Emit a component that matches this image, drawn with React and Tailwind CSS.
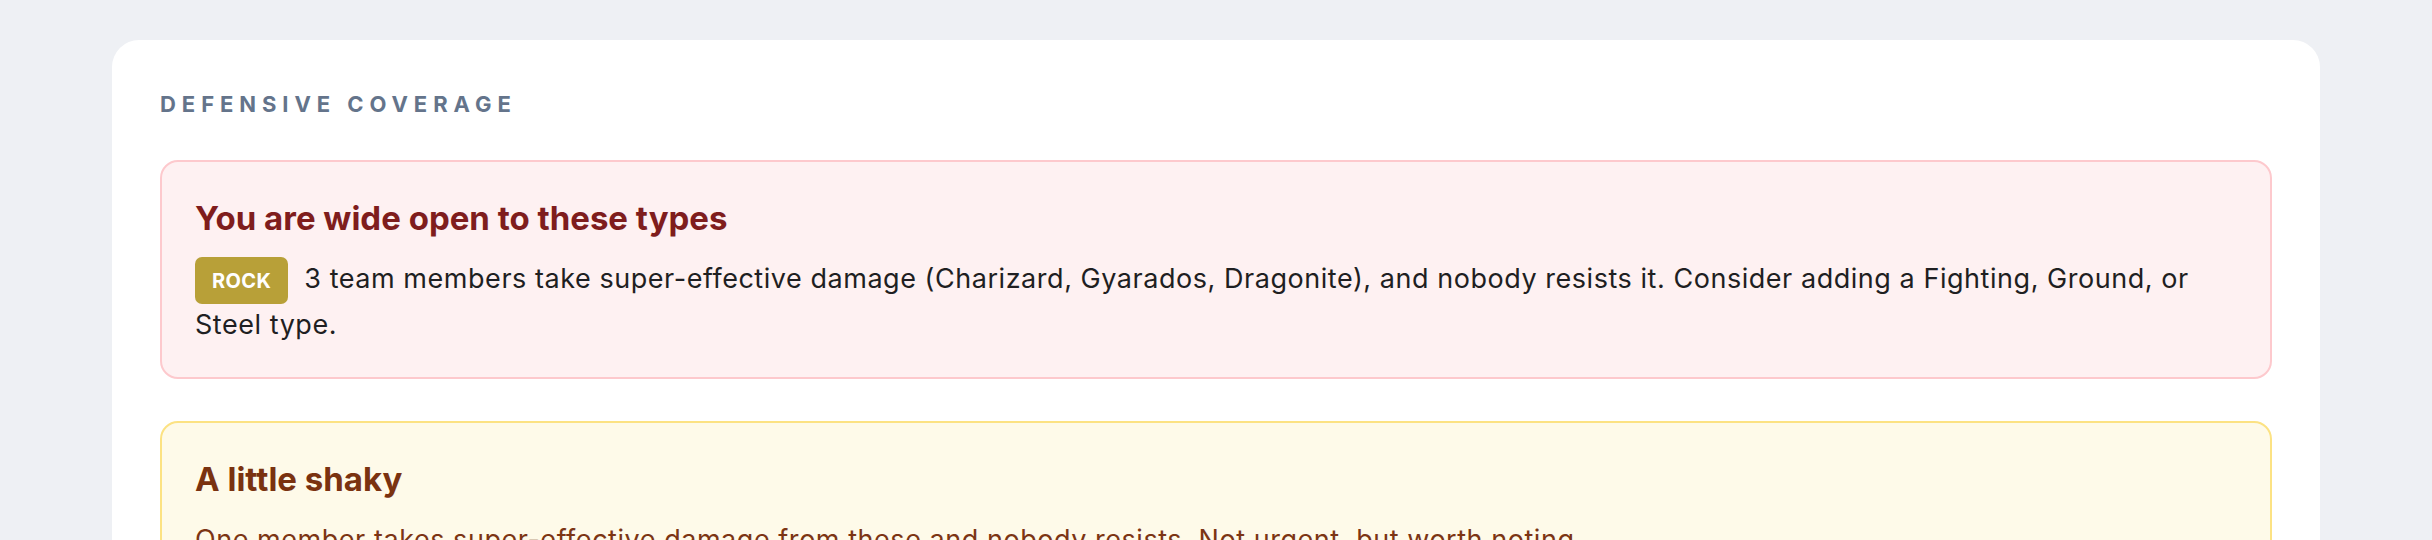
import React from 'react';

const warnings = [
  {
    tone: 'danger',
    title: 'You are wide open to these types',
    type: 'Rock',
    text: '3 team members take super-effective damage (Charizard, Gyarados, Dragonite), and nobody resists it. Consider adding a Fighting, Ground, or Steel type.',
  },
  {
    tone: 'caution',
    title: 'A little shaky',
    text: 'One member takes super-effective damage from these and nobody resists. Not urgent, but worth noting.',
  },
];

const toneStyles = {
  danger: {
    box: 'bg-[#fef1f2] border-[#fdc9cd]',
    title: 'text-[#7f1d1d]',
    text: 'text-[#1f1f22]',
  },
  caution: {
    box: 'bg-[#fefae9] border-[#fce283]',
    title: 'text-[#7a3210]',
    text: 'text-[#7c3514]',
  },
};

const TypeBadge = ({ type }) => (
  <span className="inline-flex h-[47px] -my-[6px] items-center align-middle px-[17px] mr-[16px] rounded-[7px] bg-[#b8a038] text-white text-[20px] font-bold uppercase tracking-[0.02em] leading-none">
    {type}
  </span>
);

const CoverageCard = ({ tone, title, type, text }) => {
  const s = toneStyles[tone];
  return (
    <div className={`border-2 rounded-[18px] px-[33px] pt-[33px] pb-[29px] ${s.box}`}>
      <h3 className={`text-[33px] leading-[46px] font-bold ${s.title}`}>{title}</h3>
      <p className={`mt-[15px] text-[27px] leading-[46px] tracking-[0.02em] ${s.text}`}>
        {type && <TypeBadge type={type} />}
        {text}
      </p>
    </div>
  );
};

export default function App() {
  return (
    <div className="min-h-screen bg-[#eef0f4] px-[112px] pt-[40px] font-['Inter',sans-serif]">
      <div className="bg-white rounded-[27px] p-[48px]">
        <h2 className="text-[22px] leading-[33px] font-bold uppercase tracking-[0.27em] text-[#64748b]">
          Defensive Coverage
        </h2>
        <div className="mt-[39px] flex flex-col gap-[42px]">
          {warnings.map((w) => (
            <CoverageCard key={w.title} {...w} />
          ))}
        </div>
      </div>
    </div>
  );
}
